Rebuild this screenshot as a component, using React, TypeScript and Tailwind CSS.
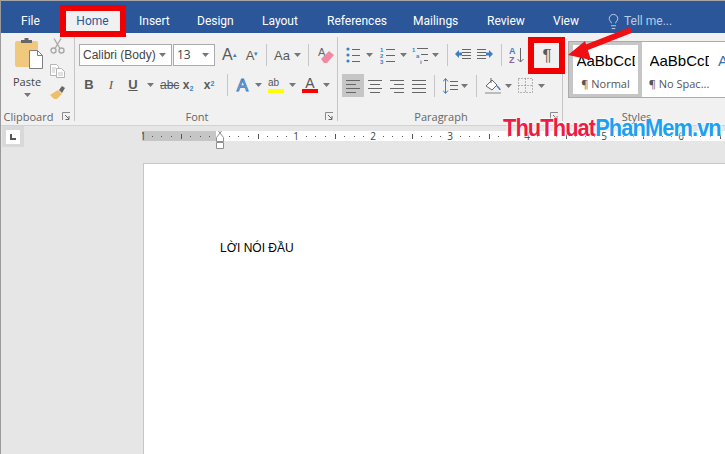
import React from 'react'
import { Lightbulb } from 'lucide-react'

const GREY = '#666666'
const BLUE = '#3f7fc1'

type P = { className?: string }

const Chev = ({ className = '' }: P) => (
  <svg width="7" height="4" className={`shrink-0 ${className}`}><path d="M0 0h7L3.5 4z" fill="#777" /></svg>
)
const Sep = ({ className = '' }: P) => <div className={`w-px h-[22px] bg-[#c6c6c6] shrink-0 ${className}`} />

const Launcher = () => (
  <svg width="9" height="9" className="shrink-0">
    <path d="M.5 8V.5H8" fill="none" stroke="#8a8a8a" />
    <path d="M3 3l4 4M7 4v3.5H3.5" fill="none" stroke="#666" />
  </svg>
)

// lines used by the list and align buttons
const Lines = ({ w, rows, className = '' }: P & { w: number; rows: [number, number, number][] }) => (
  <svg width={w} height="16" className={`shrink-0 ${className}`}>
    {rows.map(([x1, x2, y]) => <path key={y} d={`M${x1} ${y}.5H${x2}`} stroke={GREY} />)}
  </svg>
)

const Bullets = ({ className = '' }: P) => (
  <svg width="14" height="16" className={`shrink-0 ${className}`}>
    {[2, 8, 14].map(y => <React.Fragment key={y}><circle cx="2" cy={y} r="1.6" fill={BLUE} /><path d={`M6 ${y}.5H14`} stroke={GREY} /></React.Fragment>)}
  </svg>
)
const Numbers = ({ className = '' }: P) => (
  <svg width="15" height="17" className={`shrink-0 ${className}`} fontFamily="Liberation Sans" fontSize="6" fontWeight="700" fill={BLUE}>
    <text x="0" y="5">1</text><text x="0" y="11">2</text><text x="0" y="17">3</text>
    {[2, 8, 14].map(y => <path key={y} d={`M6 ${y}.5H15`} stroke={GREY} />)}
  </svg>
)
const Multi = ({ className = '' }: P) => (
  <svg width="16" height="17" className={`shrink-0 ${className}`} fontFamily="Liberation Sans" fontSize="6" fontWeight="700" fill={BLUE}>
    <text x="0" y="5">1</text><text x="4" y="11">a</text><text x="8" y="17">i</text>
    <path d="M5 1.5H16M9 7.5H16M12 13.5H16" stroke={GREY} />
  </svg>
)
const Indent = ({ flip, className = '' }: P & { flip?: boolean }) => (
  <svg width="16" height="14" className={`shrink-0 ${className}`}>
    <g transform={flip ? 'translate(16 0) scale(-1 1)' : undefined}>
      <path d="M7 1.5H16M7 4.5H16M7 7.5H16M7 10.5H16M0 13.5" stroke={GREY} />
      <path d="M0 6l4-4v2.5h3v3H4V10z" fill={BLUE} />
    </g>
  </svg>
)

const Paste = () => (
  <svg width="30" height="32" className="ml-[14px]">
    <rect x="0" y="4" width="23" height="26" rx="2" fill="#f0c97e" />
    <path d="M6 6V3h3.500V1h4v2H17v3z" fill="#666" />
    <path d="M14.500 13.500h8l5 5v13h-13z" fill="#fff" stroke="#7f7f7f" />
    <path d="M22.500 13.500v5h5" fill="none" stroke="#7f7f7f" />
  </svg>
)
const Scissors = () => (
  <svg width="15" height="16" fill="none" stroke="#a9a9a9" strokeWidth="1.4">
    <circle cx="3.500" cy="12.500" r="2.500" /><circle cx="11.500" cy="12.500" r="2.500" />
    <path d="M5 10.500L11 .5M10 10.500L4 .5" />
  </svg>
)
const CopyIcon = () => (
  <svg width="15" height="14" fill="#fff" stroke="#b5b5b5">
    <path d="M.5.5h6l2 2v9h-8z" /><path d="M6.500 4.500h5l3 3v6h-8z" />
    <path d="M2 4h4M2 6h3M2 8h3M8 9h5M8 11h5" strokeWidth=".8" />
  </svg>
)
const Painter = () => (
  <svg width="16" height="14">
    <path d="M9 5l3-4 3 2-3 5z" fill="#666" />
    <path d="M0 10l8-5 4 4-5 5H4z" fill="#edbf6a" />
  </svg>
)

const Gl = ({ children, className = '' }: P & { children: React.ReactNode }) => (
  <span className={`shrink-0 text-center text-[#5a5a5a] font-['Liberation_Sans',sans-serif] ${className}`}>{children}</span>
)

const Group = ({ label, launcher, className = '', children }: P & { label: string; launcher?: boolean; children: React.ReactNode }) => (
  <div className={`flex flex-col my-1 border-r border-[#c6c6c6] shrink-0 ${className}`}>
    <div className="flex-1 min-h-0">{children}</div>
    <div className="flex items-center h-[14px] mb-[-2px]">
      <span className="flex-1 text-center text-[11px] leading-none text-[#666]">{label}</span>
      <span className="w-[18px] flex justify-end pr-[3px]">{launcher && <Launcher />}</span>
    </div>
  </div>
)

const Ruler = () => {
  const ticks: React.ReactNode[] = []
  const base = 77
  const zero = 77
  for (let i = -8; i < 62; i++) {
    const x = zero + (i * base) / 8
    if (i % 8 === 0) continue
    ticks.push(i % 4 === 0
      ? <path key={i} d={`M${Math.round(x)}.5 3v5`} stroke="#555" />
      : <path key={i} d={`M${Math.round(x)} 5h1v1h-1z`} fill="#555" />)
  }
  return (
    <svg width="583" height="22" className="block" fontFamily="Open Sans" fontSize="10" fill="#444" textAnchor="middle">
      <rect x="0" y="0" width="74" height="10" fill="#c6c6c6" />
      <rect x="74" y="0" width="509" height="10" fill="#fff" />
      {ticks}
      {[[1, 1], [154, 1], [231, 2], [308, 3], [385, 4], [462, 5], [539, 6]].map(([x, n]) => <text key={x} x={x} y="9">{n}</text>)}
      <path d="M74.500 -2.500h7l-3.500 4.500 3.500 4.500v4h-7v-4l3.500-4.500-3.500-4.500z" fill="#fff" stroke="#8f8f8f" />
      <path d="M74.500 11.500h7v6h-7z" fill="#fff" stroke="#8f8f8f" />
    </svg>
  )
}

export default function App() {
  return (
    <div className="relative w-[725px] h-[454px] overflow-hidden bg-[#e6e6e6] border-l border-[#9a9a9a] font-['Open_Sans',sans-serif] flex flex-col">
      {/* tabs */}
      <div className="h-[33px] bg-[#2b579a] border-t border-[#a5a5a5] flex items-end pl-[20px] text-[12px] text-white shrink-0 font-['Roboto',sans-serif]">
        <span className="h-[23px] leading-[23px] w-[19px]">File</span>
        <span className="h-[23px] leading-[23px] ml-[25px] w-[55px] text-center bg-[#f1f1f1] text-[#2b579a]">Home</span>
        <div className="flex h-[23px] leading-[23px] ml-[19px]">
          <span className="w-[58px]">Insert</span>
          <span className="w-[65px]">Design</span>
          <span className="w-[65px]">Layout</span>
          <span className="w-[86px]">References</span>
          <span className="w-[74px]">Mailings</span>
          <span className="w-[66px]">Review</span>
          <span className="w-[52px]">View</span>
          <span className="flex items-center text-[#bccbe2] gap-[1px]">
            <Lightbulb size={17} strokeWidth={1.2} className="text-[#d5deeb]" />
            <span className="ml-[1px]">Tell me...</span>
          </span>
        </div>
      </div>

      {/* ribbon */}
      <div className="h-[93px] bg-[#f1f1f1] border-b border-[#d2d2d2] flex shrink-0">
        <Group label="Clipboard" launcher className="w-[74px]">
          <div className="flex">
            <div className="flex flex-col w-[49px]">
              <Paste />
              <span className="mt-[6px] ml-[12px] text-[11px] leading-[14px] text-[#444]">Paste</span>
              <Chev className="ml-[23px] mt-[4px]" />
            </div>
            <div className="flex flex-col">
              <div className="h-[24px] pt-[1px]"><Scissors /></div>
              <div className="h-[24px] pt-[3px]"><CopyIcon /></div>
              <div><Painter /></div>
            </div>
          </div>
        </Group>

        <Group label="Font" launcher className="w-[263px]">
          <div className="flex items-center h-[22px] mt-[7px] pl-[4px]">
            <div className="w-[93px] h-[22px] bg-white border border-[#ababab] flex items-center pl-[3px] pr-[5px] justify-between text-[12px] text-[#444] font-['Liberation_Sans',sans-serif]">
              <span>Calibri (Body)</span><Chev />
            </div>
            <div className="w-[42px] h-[22px] ml-[1px] bg-white border border-[#ababab] flex items-center pl-[3px] pr-[5px] justify-between text-[12px] text-[#444]">
              <span>13</span><Chev />
            </div>
            <Gl className="ml-[7px] w-[14px] text-[16px] leading-none relative">A<sup className="text-[#3f7fc1] text-[7px]">▴</sup></Gl>
            <Gl className="ml-[9px] w-[14px] text-[13px] leading-none">A<sup className="text-[#3f7fc1] text-[7px]">▾</sup></Gl>
            <Sep className="ml-[7px]" />
            <Gl className="ml-[7px] w-[16px] text-[13px] leading-none">Aa</Gl>
            <Chev className="ml-[4px]" />
            <Sep className="ml-[7px]" />
            <svg width="16" height="17" className="ml-[9px] shrink-0">
              <text x="0" y="9" fontSize="11" fill="#666" fontFamily="Liberation Sans">A</text>
              <path d="M3 12l8-8 5 4-7 8H6z" fill="#ed8ba0" />
            </svg>
          </div>
          <div className="flex items-center h-[22px] mt-[8px] pl-[7px]">
            <Gl className="w-[14px] text-[13px] font-bold">B</Gl>
            <Gl className="ml-[8px] w-[14px] text-[13px] italic font-['Liberation_Serif',serif]">I</Gl>
            <Gl className="ml-[8px] w-[14px] text-[13px] font-bold underline">U</Gl>
            <Chev className="ml-[7px]" />
            <Gl className="ml-[6px] w-[17px] text-[12px] line-through">abc</Gl>
            <Gl className="ml-[4px] w-[14px] text-[12px] font-bold">x<sub className="text-[#3f7fc1] text-[7px]">2</sub></Gl>
            <Gl className="ml-[7px] w-[14px] text-[12px] font-bold">x<sup className="text-[#3f7fc1] text-[7px]">2</sup></Gl>
            <Sep className="ml-[11px]" />
            <span className="ml-[7px] w-[15px] shrink-0 text-[17px] leading-none text-center text-[#dbe6f4] font-['Liberation_Sans',sans-serif] [-webkit-text-stroke:1px_#3f7fc1]">A</span>
            <Chev className="ml-[5px]" />
            <div className="ml-[6px] w-[16px] shrink-0 flex flex-col items-center">
              <span className="text-[10px] leading-[11px] text-[#555] font-['Liberation_Sans',sans-serif] pr-[5px]">ab</span>
              <div className="w-[16px] h-[4px] bg-[#ffff00] mt-[1px]" />
            </div>
            <Chev className="ml-[5px]" />
            <div className="ml-[6px] w-[16px] shrink-0 flex flex-col items-center">
              <span className="text-[14px] leading-[12px] text-[#555] font-['Liberation_Sans',sans-serif]">A</span>
              <div className="w-[16px] h-[4px] bg-[#ff0000]" />
            </div>
            <Chev className="ml-[5px]" />
          </div>
        </Group>

        <Group label="Paragraph" launcher className="w-[225px]">
          <div className="flex items-center h-[22px] mt-[7px] pl-[8px]">
            <Bullets />
            <Chev className="ml-[6px]" />
            <Numbers className="ml-[7px]" />
            <Chev className="ml-[5px]" />
            <Multi className="ml-[5px]" />
            <Chev className="ml-[4px]" />
            <Sep className="ml-[8px]" />
            <Indent className="ml-[7px]" />
            <Indent flip className="ml-[6px]" />
            <Sep className="ml-[8px]" />
            <svg width="15" height="18" className="ml-[7px] shrink-0" fontFamily="Liberation Sans" fontSize="9" fontWeight="700">
              <text x="0" y="8" fill={BLUE}>A</text><text x="0" y="17" fill="#8a5fb0">Z</text>
              <path d="M11.500 2v14M8.500 13l3 3 3-3" fill="none" stroke={GREY} />
            </svg>
            <Gl className="ml-[17px] w-[12px] text-[17px] leading-none">¶</Gl>
          </div>
          <div className="flex items-center h-[23px] mt-[8px] pl-[4px]">
            <div className="w-[22px] h-[23px] bg-[#c6c6c6] flex items-center justify-center shrink-0">
              <Lines w={14} rows={[[0, 14, 2], [0, 10, 6], [0, 14, 10], [0, 10, 14]]} />
            </div>
            <Lines w={14} className="ml-[4px]" rows={[[0, 14, 2], [2, 12, 6], [0, 14, 10], [2, 12, 14]]} />
            <Lines w={14} className="ml-[8px]" rows={[[0, 14, 2], [4, 14, 6], [0, 14, 10], [4, 14, 14]]} />
            <Lines w={14} className="ml-[8px]" rows={[[0, 14, 2], [0, 14, 6], [0, 14, 10], [0, 14, 14]]} />
            <Sep className="ml-[8px]" />
            <svg width="15" height="18" className="ml-[8px] shrink-0">
              <path d="M2.500 2v14M0 4.500l2.500-3 2.500 3M0 13.500l2.500 3 2.500-3" fill="none" stroke={BLUE} />
              <path d="M7 4.500h8M7 8.500h8M7 12.500h8" stroke={GREY} />
            </svg>
            <Chev className="ml-[3px]" />
            <Sep className="ml-[8px]" />
            <svg width="16" height="17" className="ml-[8px] shrink-0">
              <path d="M1 9l6-6 5 5-5 5z" fill="#fff" stroke={GREY} />
              <path d="M6 1v5" stroke={GREY} />
              <path d="M12 9c2 2 3 3 3 4" stroke={BLUE} fill="none" strokeWidth="1.500" />
              <path d="M0 15h16v2H0z" fill="#bcbcbc" />
            </svg>
            <Chev className="ml-[4px]" />
            <svg width="15" height="15" className="ml-[6px] shrink-0" fill="none" stroke="#777" strokeDasharray="1 2">
              <path d="M.5.500h14v14H.5zM7.500 .5v14M.5 7.500h14" />
            </svg>
            <Chev className="ml-[5px]" />
          </div>
        </Group>

        <Group label="Styles" className="flex-1 border-r-0">
          <div className="mt-[4px] ml-[5px] h-[57px] bg-white border-y border-l border-[#ababab] flex overflow-hidden">
            <div className="w-[73px] border-4 border-[#c6c6c6] flex flex-col items-center shrink-0 -my-px">
              <div className="w-[58px] overflow-hidden whitespace-nowrap text-[15px] leading-[18px] mt-[7px] text-black font-['Liberation_Sans',sans-serif]">AaBbCcDdEe</div>
              <div className="text-[11px] leading-[14px] mt-[7px] text-[#555]">¶ Normal</div>
            </div>
            <div className="w-[74px] shrink-0 flex flex-col items-center pt-[10px]">
              <div className="w-[59px] overflow-hidden whitespace-nowrap text-[15px] leading-[18px] text-black font-['Liberation_Sans',sans-serif]">AaBbCcDdEe</div>
              <div className="text-[11px] leading-[14px] mt-[7px] text-[#555] whitespace-nowrap">¶ No Spac...</div>
            </div>
            <span className="text-[15px] leading-[18px] mt-[10px] ml-[2px] text-[#2e74b5] font-['Liberation_Sans',sans-serif]">A</span>
          </div>
        </Group>
      </div>

      {/* document area */}
      <div className="flex flex-1 min-h-0">
        <div className="w-[141px] shrink-0 pl-[1px]">
          <div className="w-[22px] h-[21px] bg-[#d9d9d9] flex items-center justify-center">
            <div className="w-[14px] h-[14px] bg-white flex items-center justify-center">
              <svg width="6" height="6"><path d="M0 0h2v4h4v2H0z" fill="#555" /></svg>
            </div>
          </div>
        </div>
        <div className="flex-1 min-w-0 pt-[5px]">
          <Ruler />
          <div className="mt-[10px] ml-px h-[400px] bg-white border-t border-l border-[#c6c6c6] pl-[76px] pt-[76px]">
            <p className="text-[12px] leading-[16px] text-black font-['Liberation_Sans',sans-serif]">LỜI NÓI ĐẦU</p>
          </div>
        </div>
      </div>

      {/* annotations over the screenshot */}
      <div className="absolute left-[59px] top-[5px] w-[66px] h-[32px] border-[6px] border-[#f00000]" />
      <div className="absolute left-[527px] top-[37px] w-[37px] h-[37px] border-[6px] border-[#f00000]" />
      <svg width="80" height="50" className="absolute left-[559px] top-[22px]">
        <path d="M71 8L20 28" stroke="#f00f14" strokeWidth="6" />
        <path d="M8 33L25 19l6 19z" fill="#f00f14" />
      </svg>
      <div className="absolute left-[502px] top-[115px] origin-left scale-x-[0.91] whitespace-nowrap text-[24px] leading-[26px] font-bold tracking-[-1px] font-['Liberation_Sans',sans-serif] [text-shadow:0_0_2px_#fff,0_0_2px_#fff,0_0_3px_#fff]">
        <span className="text-[#ee1c45]">ThuThuat</span><span className="text-[#1ca1f2]">PhanMem.vn</span>
      </div>
    </div>
  )
}
